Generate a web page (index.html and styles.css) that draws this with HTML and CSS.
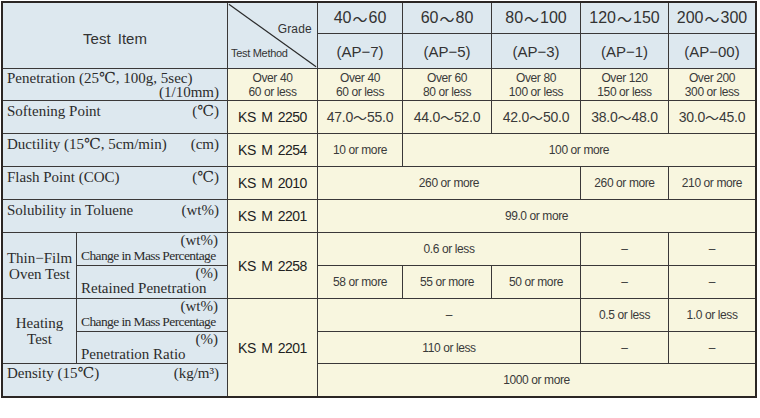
FILE: index.html
```html
<!DOCTYPE html>
<html>
<head>
<meta charset="utf-8">
<link rel="stylesheet" href="styles.css">
</head>
<body>
<div class="spec">
  <div class="hd item s2 r2">Test Item</div>
  <div class="hd diag r2">
    <svg class="slash" viewBox="0 0 100 100" preserveAspectRatio="none"><line x1="1" y1="2" x2="99" y2="98" stroke="#2a2a2a" stroke-width="1.2" vector-effect="non-scaling-stroke"/></svg>
    <span class="grade">Grade</span>
    <span class="method">Test Method</span>
  </div>
  <div class="hd grd">40<span class="t">～</span>60</div>
  <div class="hd grd">60<span class="t">～</span>80</div>
  <div class="hd grd">80<span class="t">～</span>100</div>
  <div class="hd grd">120<span class="t">～</span>150</div>
  <div class="hd grd">200<span class="t">～</span>300</div>
  <div class="hd ap">(AP−7)</div>
  <div class="hd ap">(AP−5)</div>
  <div class="hd ap">(AP−3)</div>
  <div class="hd ap">(AP−1)</div>
  <div class="hd ap">(AP−00)</div>

  <div class="lt s2"><span>Penetration (25℃, 100g, 5sec)</span><span class="u">(1/10mm)</span></div>
  <div class="v sm">Over 40<br>60 or less</div>
  <div class="v sm">Over 40<br>60 or less</div>
  <div class="v sm">Over 60<br>80 or less</div>
  <div class="v sm">Over 80<br>100 or less</div>
  <div class="v sm">Over 120<br>150 or less</div>
  <div class="v sm">Over 200<br>300 or less</div>

  <div class="lt s2 row"><span>Softening Point</span><span class="u">(℃)</span></div>
  <div class="v ks">KS M 2250</div>
  <div class="v md">47.0<span class="t">～</span>55.0</div>
  <div class="v md">44.0<span class="t">～</span>52.0</div>
  <div class="v md">42.0<span class="t">～</span>50.0</div>
  <div class="v md">38.0<span class="t">～</span>48.0</div>
  <div class="v md">30.0<span class="t">～</span>45.0</div>

  <div class="lt s2 row"><span>Ductility (15℃, 5cm/min)</span><span class="u">(cm)</span></div>
  <div class="v ks">KS M 2254</div>
  <div class="v sm">10 or more</div>
  <div class="v sm s4">100 or more</div>

  <div class="lt s2 row"><span>Flash Point (COC)</span><span class="u">(℃)</span></div>
  <div class="v ks">KS M 2010</div>
  <div class="v sm s3">260 or more</div>
  <div class="v sm">260 or more</div>
  <div class="v sm">210 or more</div>

  <div class="lt s2 row"><span>Solubility in Toluene</span><span class="u">(wt%)</span></div>
  <div class="v ks">KS M 2201</div>
  <div class="v sm s5">99.0 or more</div>

  <div class="lt grp r2">Thin−Film<br>Oven Test</div>
  <div class="lt sub"><span class="u">(wt%)</span><span class="cond">Change in Mass Percentage</span></div>
  <div class="v ks r2">KS M 2258</div>
  <div class="v sm s3">0.6 or less</div>
  <div class="v sm">–</div>
  <div class="v sm">–</div>
  <div class="lt sub"><span class="u">(%)</span><span>Retained Penetration</span></div>
  <div class="v sm">58 or more</div>
  <div class="v sm">55 or more</div>
  <div class="v sm">50 or more</div>
  <div class="v sm">–</div>
  <div class="v sm">–</div>

  <div class="lt grp r2">Heating<br>Test</div>
  <div class="lt sub"><span class="u">(wt%)</span><span class="cond">Change in Mass Percentage</span></div>
  <div class="v ks r3">KS M 2201</div>
  <div class="v sm s3">–</div>
  <div class="v sm">0.5 or less</div>
  <div class="v sm">1.0 or less</div>
  <div class="lt sub"><span class="u">(%)</span><span>Penetration Ratio</span></div>
  <div class="v sm s3">110 or less</div>
  <div class="v sm">–</div>
  <div class="v sm">–</div>

  <div class="lt s2 row dens"><span>Density (15℃)</span><span class="u">(kg/m³)</span></div>
  <div class="v sm s5">1000 or more</div>
</div>
</body>
</html>
```

FILE: styles.css
```css
html, body {
  margin: 0;
  padding: 0;
  background: #ffffff;
}

.spec {
  margin: 1px 0 0 1px;
  width: 752px;
  display: grid;
  grid-template-columns: 73px 150px 89px 84px 88px 88px 87px 86px;
  grid-template-rows: 30px 34px 31px 32px 32px 32px 32px 32px 32px 32px 31px 32px;
  gap: 1px;
  background: #3a3838;
  border: 2px solid #2b2624;
}

.s2 { grid-column: span 2; }
.s3 { grid-column: span 3; }
.s4 { grid-column: span 4; }
.s5 { grid-column: span 5; }
.r2 { grid-row: span 2; }
.r3 { grid-row: span 3; }

.hd {
  background: #dde8ef;
  color: #333;
  font-family: "Liberation Sans", Arial, "Noto Sans CJK KR", sans-serif;
  display: flex;
  align-items: center;
  justify-content: center;
}

.t {
  font-family: "Noto Sans CJK KR", sans-serif;
}

.deg {
  font-family: "DejaVu Sans", sans-serif;
}

.item {
  font-size: 15px;
  word-spacing: 3px;
  padding-top: 6px;
  box-sizing: border-box;
}

.diag {
  position: relative;
  flex-direction: column;
  justify-content: space-between;
  align-items: stretch;
  padding: 19px 5px 8px 3px;
}

.slash {
  position: absolute;
  left: 0;
  top: 0;
  width: 100%;
  height: 100%;
}

.grade {
  align-self: flex-end;
  font-size: 12px;
  line-height: 14px;
  letter-spacing: 0.2px;
}

.method {
  align-self: flex-start;
  font-size: 11px;
  line-height: 13px;
  letter-spacing: -0.3px;
}

.grd {
  font-size: 16px;
  color: #333;
}

.grd .t {
  font-size: 15px;
  margin: 0 1px;
}

.ap {
  font-size: 15px;
  color: #333;
}

.lt {
  background: #dde8ef;
  color: #2c2c2c;
  font-family: "Liberation Serif", "Times New Roman", "DejaVu Serif", "Noto Sans CJK KR", serif;
  font-size: 15px;
  line-height: 14px;
  padding: 2px 8px 0 4px;
  display: flex;
  flex-direction: column;
}

.lt .u {
  align-self: flex-end;
}

.lt.row {
  flex-direction: row;
  justify-content: space-between;
  align-items: flex-start;
  padding-top: 3px;
}

.lt.row .u {
  align-self: flex-start;
}

.lt.dens {
  padding-top: 2px;
}

.lt.sub {
  padding: 0 9px 0 4px;
  line-height: 15px;
}

.cond {
  font-size: 13.5px;
  letter-spacing: -0.6px;
}

.lt.grp {
  align-items: center;
  justify-content: center;
  text-align: center;
  line-height: 16px;
  padding: 0;
}

.v {
  background: #f8f6df;
  color: #3a3a3a;
  font-family: "Liberation Sans", Arial, "Noto Sans CJK KR", sans-serif;
  display: flex;
  align-items: center;
  justify-content: center;
  text-align: center;
}

.sm {
  font-size: 12px;
  line-height: 14px;
  letter-spacing: -0.4px;
}

.md {
  font-size: 14px;
  letter-spacing: -0.2px;
}

.md .t {
  font-size: 14px;
}

.ks {
  font-size: 14px;
  letter-spacing: -0.5px;
  word-spacing: 2px;
  color: #222;
}
```
